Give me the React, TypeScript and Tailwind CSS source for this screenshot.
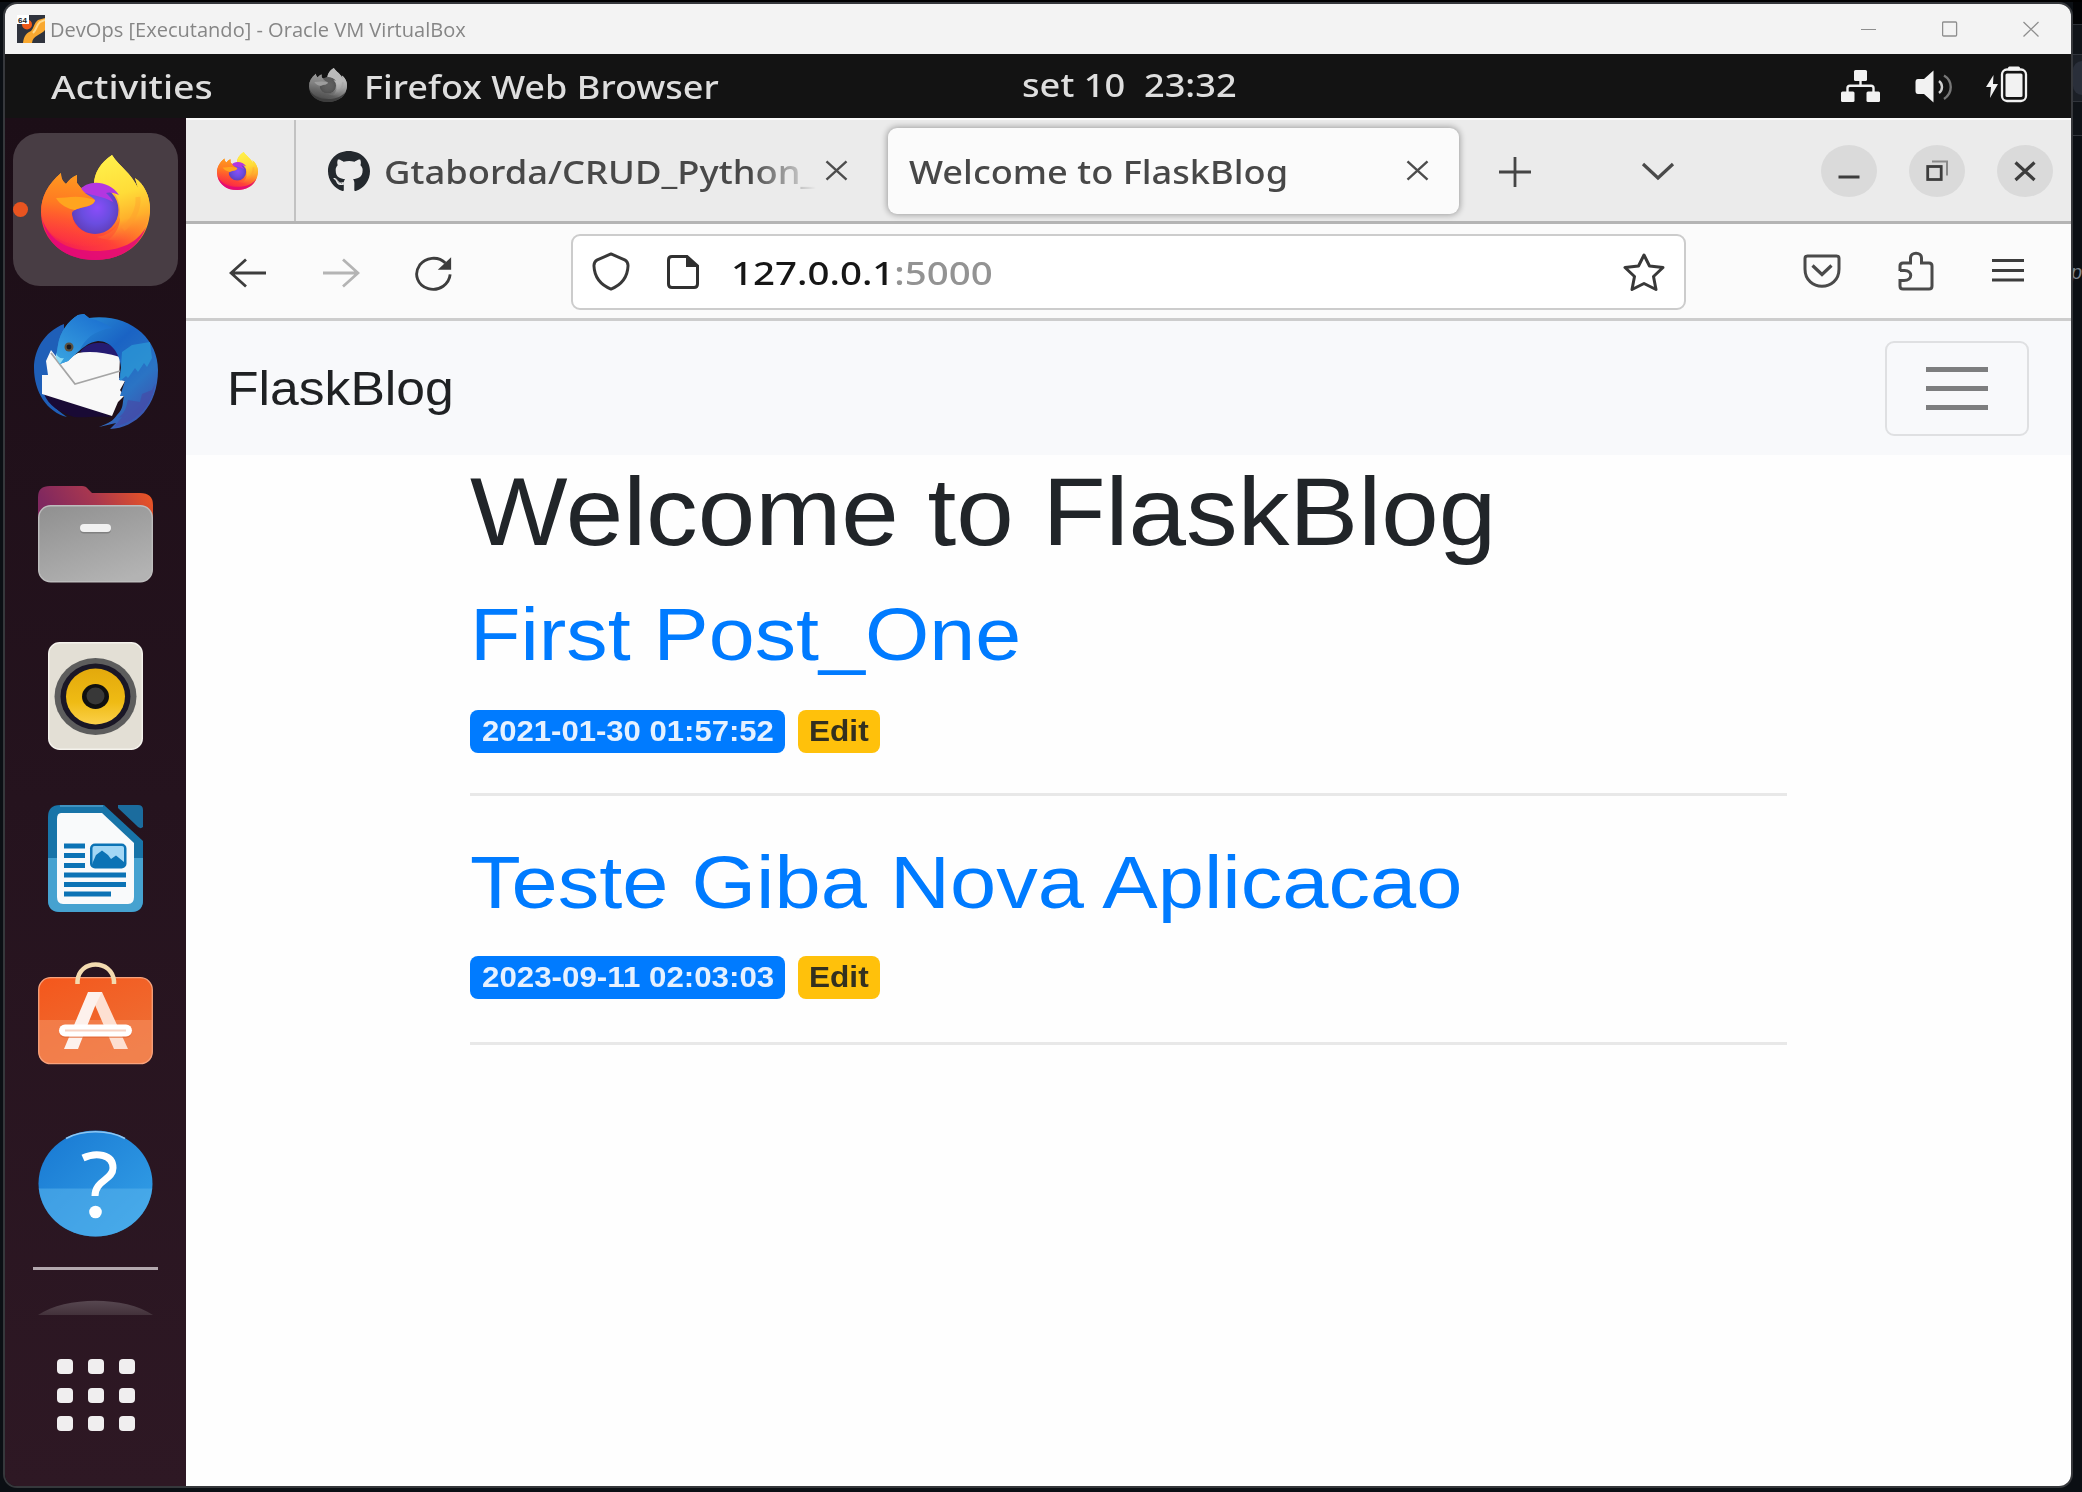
import React, { useLayoutEffect, useRef, useState } from "react";
import { FaGithub } from "react-icons/fa";

/** A single line of text stretched horizontally to fill the width of its box. */
function Stretch({ className, children }: { className: string; children: React.ReactNode }) {
  const box = useRef<HTMLSpanElement>(null);
  const text = useRef<HTMLSpanElement>(null);
  const [scale, setScale] = useState(1);
  useLayoutEffect(() => {
    if (box.current && text.current && text.current.offsetWidth) {
      setScale(box.current.clientWidth / text.current.offsetWidth);
    }
  }, []);
  return (
    <span ref={box} className={"block shrink-0 whitespace-pre " + className}>
      <span ref={text} className="inline-block origin-left" style={{ transform: `scaleX(${scale})` }}>
        {children}
      </span>
    </span>
  );
}

function FirefoxIcon({ className, id }: { className: string; id: string }) {
  return (
    <svg className={"block shrink-0 " + className} viewBox="0 0 109 105" preserveAspectRatio="none">
      <defs>
        <linearGradient id={id + "a"} x1="0.85" y1="0.05" x2="0.3" y2="1">
          <stop offset="0" stopColor="#fff44f" />
          <stop offset="0.3" stopColor="#ffc72f" />
          <stop offset="0.5" stopColor="#ff8a25" />
          <stop offset="0.72" stopColor="#ff4238" />
          <stop offset="0.86" stopColor="#fb2f45" />
          <stop offset="1" stopColor="#f0165c" />
        </linearGradient>
        <radialGradient id={id + "b"} cx="0.5" cy="0.5" r="0.62" fx="0.55" fy="0.45">
          <stop offset="0" stopColor="#8b4dfa" />
          <stop offset="0.5" stopColor="#6a4de0" />
          <stop offset="1" stopColor="#5a38a8" />
        </radialGradient>
        <linearGradient id={id + "c"} x1="0.3" y1="0" x2="0.2" y2="1">
          <stop offset="0" stopColor="#ff9a1f" />
          <stop offset="0.4" stopColor="#ff7a22" />
          <stop offset="0.9" stopColor="#ff4038" stopOpacity="0.4" />
          <stop offset="1" stopColor="#ff4038" stopOpacity="0" />
        </linearGradient>
        <linearGradient id={id + "d"} x1="0.4" y1="0" x2="0.6" y2="1">
          <stop offset="0" stopColor="#fff04a" />
          <stop offset="0.45" stopColor="#ffdc38" />
          <stop offset="0.75" stopColor="#ffb02c" />
          <stop offset="1" stopColor="#ff6a34" stopOpacity="0" />
        </linearGradient>
      </defs>
      <path
        d="M20 18C7 29 0 42 0 57C0 86 24 105 54 105C86 105 109 84 109 54C109 41 103 29 94 23L97 33C90 18 78 11 71 0C60 7 53 18 53 29L40 33L36 28L36 20C31 22 28 25 25 29C21 26 20 22 20 18Z"
        fill={"url(#" + id + "a)"}
      />
      <path
        d="M2 66C10 88 30 96 55 96C80 96 97 87 105 72C98 92 80 105 54 105C26 105 6 90 2 66Z"
        fill="#e0087a"
        opacity="0.85"
      />
      <path
        d="M71 0C59 8 53 19 53 29C68 29 78 38 79 55C79 72 70 80 56 82C85 92 109 78 109 54C109 41 103 29 94 23L97 33C90 18 78 11 71 0Z"
        fill={"url(#" + id + "d)"}
      />
      <path d="M97 42C98 56 90 68 82 74" fill="none" stroke="#ff9a2e" strokeWidth="5" opacity="0.35" />
      <ellipse cx="54" cy="55" rx="23.5" ry="24" fill={"url(#" + id + "b)"} />
      <path d="M38 36C46 24 68 25 78 40C72 37 67 37 65 38C68 41 71 44 72 47C62 41 48 40 38 36Z" fill="#b436e0" />
      <path
        d="M20 18C7 29 0 42 0 57C2 80 24 92 50 91C66 90 79 78 79 62C75 75 64 80 54 79C40 79 31 70 31 58C34 51 52 54 54 45C50 41 43 39 40 33L36 28L36 20C31 22 28 25 25 29C21 26 20 22 20 18Z"
        fill={"url(#" + id + "c)"}
      />
      <path d="M15 43C27 43 36 39 54 45C53 52 41 51 34 55C27 54 19 50 15 43Z" fill="#ffa41f" />
    </svg>
  );
}

function ThunderbirdIcon() {
  return (
    <svg className="mt-[28px] block h-[116px] w-[124px] shrink-0" viewBox="0 0 124 116">
      <defs>
        <linearGradient id="tb1" x1="0.1" y1="0" x2="0.9" y2="1">
          <stop offset="0" stopColor="#2a97da" />
          <stop offset="0.4" stopColor="#1a63c4" />
          <stop offset="0.7" stopColor="#2b74c4" />
          <stop offset="1" stopColor="#4248a8" />
        </linearGradient>
        <linearGradient id="tb2" x1="0.8" y1="0" x2="0.1" y2="1">
          <stop offset="0" stopColor="#1b6fd0" />
          <stop offset="1" stopColor="#39a3e0" />
        </linearGradient>
      </defs>
      <path d="M30 10C10 18 0 36 0 54C0 78 13 98 33 103C21 95 14 87 12 79L40 60L30 30Z" fill="#1f5fb8" />
      <path d="M10 80L60 94L78 103C60 102 50 104 40 103C25 98 15 92 10 80Z" fill="#190a35" />
      <path d="M46 38C56 24 82 26 88 44L70 46Z" fill="#251b72" />
      <path d="M17 36L12 47L14 61L8 61L8 80L78 102L84 88L90 82L86 76L91 67L85 64L86 43C70 38 55 37 44 39L27 49Z" fill="#f8f8f8" />
      <path d="M17 39L41 70L86 57" fill="none" stroke="#a5a5a5" strokeWidth="1.8" />
      <path
        d="M22 43L24 31C26 18 34 7 44 1L50 0L55 4C95 -1 124 24 124 56C124 92 102 114 76 115L82 109L65 113C75 109 79 107 83 101C90 94 88 90 90 82L86 82L91 67L85 66L87 54C86 38 76 27 64 27C55 28 46 35 34 47L26 50Z"
        fill="url(#tb1)"
      />
      <path d="M22 43L24 31C26 18 34 7 44 1L50 0L55 4C64 6 72 10 78 14C60 16 50 26 46 36L34 47L26 50Z" fill="url(#tb2)" />
      <path d="M88 38L98 31L116 28L118 44L113 53L110 49L104 58L101 54L94 64L92 62L86 67Z" fill="#2d9fda" opacity="0.65" />
      <path d="M121 70C118 92 102 108 80 113L88 103L84 104C94 96 92 90 94 86L106 88L108 80L118 76Z" fill="#4747a5" opacity="0.6" />
      <path d="M22 39C23 43 27 45 30 44L26 50L22 44Z" fill="#8fdcf5" />
      <circle cx="35" cy="33" r="4.5" fill="#5c5140" />
      <circle cx="35" cy="33" r="2.4" fill="#17181f" />
    </svg>
  );
}

function FilesIcon() {
  return (
    <svg className="mt-[55px] block h-[98px] w-[115px] shrink-0" viewBox="0 0 115 98">
      <defs>
        <linearGradient id="fi1" x1="0" y1="0.2" x2="1" y2="0">
          <stop offset="0" stopColor="#80285f" />
          <stop offset="0.45" stopColor="#a9374f" />
          <stop offset="1" stopColor="#f2581f" />
        </linearGradient>
        <linearGradient id="fi2" x1="0.2" y1="0" x2="0.7" y2="1">
          <stop offset="0" stopColor="#929292" />
          <stop offset="1" stopColor="#b3b3b3" />
        </linearGradient>
      </defs>
      <path d="M0 12Q0 1 12 1H44Q48 1 50 4L54 8H102Q115 8 115 20V40H0Z" fill="url(#fi1)" />
      <rect x="0.7" y="20.7" width="113.6" height="76" rx="12" fill="url(#fi2)" stroke="#bdbdbd" strokeWidth="1.4" />
      <rect x="42" y="40.500" width="31" height="8" rx="4" fill="#808080" />
      <rect x="42" y="39" width="31" height="8" rx="4" fill="#f1f1f1" />
    </svg>
  );
}

function MusicIcon() {
  return (
    <svg className="mt-[59px] block h-[108px] w-[95px] shrink-0" viewBox="0 0 95 108">
      <defs>
        <linearGradient id="mu1" x1="0" y1="0" x2="0" y2="1">
          <stop offset="0" stopColor="#e3a90c" />
          <stop offset="0.6" stopColor="#efbb14" />
          <stop offset="1" stopColor="#fbd04a" />
        </linearGradient>
      </defs>
      <rect x="0.7" y="0.7" width="93.6" height="106.6" rx="11" fill="#e3dfd5" stroke="#f4f2ec" strokeWidth="1.4" />
      <ellipse cx="47.500" cy="54.500" rx="41" ry="38.500" fill="#5d5d5d" />
      <ellipse cx="47.500" cy="54.500" rx="35" ry="33" fill="#1a1726" />
      <ellipse cx="47.500" cy="54.500" rx="29.500" ry="28" fill="url(#mu1)" />
      <ellipse cx="47.500" cy="54.500" rx="13.500" ry="12.500" fill="#101010" />
      <ellipse cx="47.500" cy="54" rx="9" ry="8.500" fill="#383838" />
    </svg>
  );
}

function WriterIcon() {
  return (
    <svg className="mt-[55px] block h-[107px] w-[95px] shrink-0" viewBox="0 0 95 107">
      <path d="M12 0H56L95 36V95Q95 107 83 107H12Q0 107 0 95V12Q0 0 12 0Z" fill="#1874a8" />
      <path d="M0 53H95V95Q95 107 83 107H12Q0 107 0 95Z" fill="#46a2d0" />
      <path d="M12 1H55" stroke="#4d9cc8" strokeWidth="1.500" />
      <path d="M70 0H90Q95 0 95 5V22Q92 25 88 20L70 3Z" fill="#1b6c9e" />
      <path d="M13 8H54L86 38V92Q86 99 80 99H15Q9 99 9 92V14Q9 8 13 8Z" fill="#f9fafb" />
      <g fill="#0c73b5">
        <rect x="16" y="38.500" width="21" height="5" />
        <rect x="16" y="48" width="21" height="5" />
        <rect x="16" y="58" width="21" height="5" />
        <rect x="16" y="67.500" width="62" height="5" />
        <rect x="16" y="77" width="62" height="5" />
        <rect x="16" y="86.500" width="47" height="5" />
        <rect x="42" y="38.500" width="36.500" height="25" rx="5" />
      </g>
      <rect x="44.500" y="41" width="31.500" height="19" rx="2" fill="#a3d7f5" />
      <path d="M44.500 58L48 50L54 45.500L60 50L63 54L68 50.500L76 57V60H45Z" fill="#0c73b5" />
    </svg>
  );
}

function SoftwareIcon() {
  return (
    <svg className="mt-[50px] block h-[103px] w-[115px] shrink-0" viewBox="0 0 115 103">
      <defs>
        <linearGradient id="so1" x1="0" y1="0" x2="0.6" y2="1">
          <stop offset="0" stopColor="#f4571c" />
          <stop offset="1" stopColor="#ee6f35" />
        </linearGradient>
      </defs>
      <rect x="0.7" y="15.700" width="113.600" height="86" rx="12" fill="url(#so1)" />
      <path d="M0.700 58H114.300V90Q114.300 101.700 102 101.700H13Q0.700 101.700 0.700 90Z" fill="#f38a5a" opacity="0.65" />
      <rect x="0.700" y="15.700" width="113.600" height="86" rx="12" fill="none" stroke="#f8a27c" strokeWidth="1.300" />
      <path d="M39.500 22V19C41 -3 74 -3 76 19V22" fill="none" stroke="#f3dbb0" strokeWidth="4.500" />
      <path d="M50 30H64L90 87H76L57 43Z" fill="#fde0d2" />
      <path d="M50 30H64L57.500 43L40 87H26Z" fill="#fdf1ec" />
      <rect x="21" y="64" width="73" height="12" rx="6" fill="#e0632f" opacity="0.6" />
      <rect x="21" y="62.500" width="73" height="12" rx="6" fill="#ffffff" />
      <path d="M27 68.500H88" stroke="#f8d3c4" strokeWidth="2" />
    </svg>
  );
}

function HelpIcon() {
  return (
    <svg className="mt-[65px] block h-[107px] w-[115px] shrink-0" viewBox="0 0 115 107">
      <defs>
        <clipPath id="he1">
          <rect x="0" y="58.500" width="115" height="49" />
        </clipPath>
        <linearGradient id="he2" x1="0" y1="0" x2="1" y2="1">
          <stop offset="0" stopColor="#1878d2" />
          <stop offset="1" stopColor="#35a2e8" />
        </linearGradient>
      </defs>
      <ellipse cx="57.500" cy="53.500" rx="57" ry="53" fill="url(#he2)" />
      <ellipse cx="57.500" cy="53.500" rx="57" ry="53" fill="#5ab4ec" opacity="0.55" clipPath="url(#he1)" />
      <path d="M28 8.500C44 -0.500 71 -0.500 87 8.500" fill="none" stroke="#8cc6f3" strokeWidth="1.500" />
      <path d="M45 28C58 22 75 24 75 38C75 50 57 50 57 66" fill="none" stroke="#fff" strokeWidth="7" />
      <circle cx="57.500" cy="82" r="6.300" fill="#fff" />
    </svg>
  );
}

function Dock() {
  return (
    <aside className="flex w-[181px] shrink-0 flex-col items-center bg-linear-to-b from-[#1c0e17] via-[#25131e] to-[#2e1824] pt-[15px]">
      <div className="relative flex h-[153px] w-[165px] shrink-0 items-center justify-center rounded-[27px] bg-[#483d44]">
        <FirefoxIcon id="dock" className="mb-[4px] h-[105px] w-[109px]" />
        <span className="absolute top-[69px] left-0 h-[15px] w-[15px] rounded-full bg-[#e95420]" />
      </div>
      <ThunderbirdIcon />
      <FilesIcon />
      <MusicIcon />
      <WriterIcon />
      <SoftwareIcon />
      <HelpIcon />
      <div className="mt-[30px] h-[3px] w-[125px] shrink-0 bg-[#b3a8ae]" />
      <svg className="mt-[30px] block h-[15px] w-[115px] shrink-0" viewBox="0 0 115 15">
        <defs>
          <linearGradient id="arc" x1="0" y1="0" x2="0" y2="1">
            <stop offset="0" stopColor="#574750" />
            <stop offset="1" stopColor="#43323b" />
          </linearGradient>
        </defs>
        <path d="M0 15C28 -4 87 -4 115 15Z" fill="url(#arc)" />
      </svg>
      <div className="mt-[44px] grid grid-cols-3 gap-x-[15px] gap-y-[13.500px]">
        {Array.from({ length: 9 }, (_, i) => (
          <span key={i} className="h-[15px] w-[16px] rounded-[4px] bg-[#f0eeef]" />
        ))}
      </div>
    </aside>
  );
}

function TitleBar() {
  return (
    <header className="flex h-[50px] shrink-0 items-center bg-[#f3f3f3]">
      <svg className="ml-[12px] block h-[28px] w-[28px]" viewBox="0 0 28 28">
        <rect width="28" height="28" fill="#2f333d" />
        <path d="M28 3L21 5C17 8 17 13 14 16C10 18 7 20 6 28H15C16 20 24 20 28 15Z" fill="#f9a82f" />
        <path d="M28 5L23 7C19 11 20 14 16 18" fill="none" stroke="#ffd98a" strokeWidth="2" />
        <circle cx="10" cy="9.500" r="5" fill="#ef5a1a" />
        <rect width="12" height="9" fill="#fff" />
        <text x="1" y="7.500" fontSize="8" fontWeight="700" fontFamily="Liberation Sans, sans-serif" fill="#222">64</text>
      </svg>
      <Stretch className="mt-[2px] ml-[5px] w-[416px] font-['Open_Sans',sans-serif] text-[20px] leading-[28px] text-[#868686]">
        DevOps [Executando] - Oracle VM VirtualBox
      </Stretch>
      <div className="mr-[32px] ml-auto flex items-center gap-[65px]">
        <svg className="block h-4 w-4" viewBox="0 0 16 16">
          <path d="M0 8.500H15" stroke="#8e8e8e" strokeWidth="1.200" />
        </svg>
        <svg className="block h-4 w-4" viewBox="0 0 16 16">
          <rect x="0.600" y="1" width="14" height="14" rx="1" fill="none" stroke="#8e8e8e" strokeWidth="1.300" />
        </svg>
        <svg className="block h-4 w-4" viewBox="0 0 16 16">
          <path d="M0.500 1L15.500 15.500M15.500 1L0.500 15.500" stroke="#8e8e8e" strokeWidth="1.300" />
        </svg>
      </div>
    </header>
  );
}

function TopBar() {
  return (
    <div className="flex h-[64px] shrink-0 items-center bg-[#131313] font-['Noto_Sans',sans-serif] text-[32px] leading-[40px] font-medium text-[#dedede]">
      <Stretch className="mt-[2px] ml-[46px] w-[162px]">Activities</Stretch>
      <FirefoxIcon id="bar" className="-mt-[3px] ml-[96px] h-[34px] w-[38px] brightness-125 grayscale opacity-75" />
      <Stretch className="mt-[2px] ml-[17px] w-[355px]">Firefox Web Browser</Stretch>
      <Stretch className="-mt-[2px] ml-[303px] w-[215px]">{"set 10  23:32"}</Stretch>
      <div className="mr-[43px] ml-auto flex items-center">
        <svg className="block h-[32px] w-[39px]" viewBox="0 0 39 32">
          <g fill="#f2f2f2">
            <rect x="13" y="0" width="13" height="11" rx="1.500" />
            <rect x="0" y="21.500" width="13.500" height="10.500" rx="1.500" />
            <rect x="25.500" y="21.500" width="13.500" height="10.500" rx="1.500" />
          </g>
          <path d="M19.500 10V16M6.500 22V18Q6.500 15.700 9 15.700H30Q32.500 15.700 32.500 18V22" fill="none" stroke="#f2f2f2" strokeWidth="2.400" />
        </svg>
        <svg className="ml-[35px] block h-[33px] w-[38px]" viewBox="0 0 38 33">
          <path d="M3 9H9L18.500 0.500V32.500L9 24H3Q0.500 24 0.500 21V12Q0.500 9 3 9Z" fill="#f2f2f2" />
          <path d="M24 11C28 14 28 20 24 23" fill="none" stroke="#cfcfcf" strokeWidth="2.400" />
          <path d="M29 5.500C38 11 38 23 29 29" fill="none" stroke="#777" strokeWidth="2.400" />
        </svg>
        <svg className="-mt-[4px] ml-[32px] block h-[37px] w-[43px]" viewBox="0 0 43 37">
          <path d="M8.500 9L1 21H6L5 32L13 18H8Z" fill="#f2f2f2" />
          <rect x="23" y="0.500" width="12" height="4" rx="1.500" fill="#f2f2f2" />
          <rect x="17" y="3.500" width="24" height="31.500" rx="5" fill="none" stroke="#f2f2f2" strokeWidth="2.300" />
          <rect x="20.500" y="7.500" width="17" height="23.500" rx="1.500" fill="#f2f2f2" />
        </svg>
      </div>
    </div>
  );
}

function CloseGlyph({ className }: { className: string }) {
  return (
    <svg className={"block h-[21px] w-[23px] shrink-0 " + className} viewBox="0 0 24 22">
      <path d="M1.500 1.500L22.500 20.500M22.500 1.500L1.500 20.500" stroke="#4d4d4d" strokeWidth="2.500" fill="none" />
    </svg>
  );
}

function TabStrip() {
  return (
    <div className="flex h-[106px] shrink-0 items-center border-t-2 border-b-[3px] border-t-[#fafafa] border-b-[#b4b4b4] bg-[#ebebeb] font-['Noto_Sans',sans-serif] text-[32px] leading-[40px] font-medium text-[#484848]">
      <div className="flex h-full w-[110px] shrink-0 items-center justify-center border-r-2 border-[#c2c2c2]">
        <FirefoxIcon id="tab" className="mr-[6px] h-[38px] w-[41px]" />
      </div>
      <FaGithub className="ml-[32px] h-[40px] w-[42px] shrink-0 text-[#24292e]" preserveAspectRatio="none" viewBox="0 8 496 484" />
      <Stretch className="mt-[3px] ml-[14px] w-[432px] mask-r-from-85% mask-r-to-100%">Gtaborda/CRUD_Python_</Stretch>
      <CloseGlyph className="ml-[9px]" />
      <div className="ml-[40px] flex h-[86px] w-[571px] shrink-0 items-center rounded-[9px] bg-[#fbfbfb] shadow-[0_0_6px_1px_rgba(0,0,0,0.33)]">
        <Stretch className="mt-[3px] ml-[21px] w-[379px]">Welcome to FlaskBlog</Stretch>
        <CloseGlyph className="mr-[30px] ml-auto" />
      </div>
      <svg className="ml-[40px] block h-[32px] w-[32px] shrink-0" viewBox="0 0 32 32">
        <path d="M0 17H32M16 2V32" stroke="#454545" strokeWidth="2.800" />
      </svg>
      <svg className="ml-[110px] block h-[20px] w-[34px] shrink-0" viewBox="0 0 34 20">
        <path d="M2 3L17 17L32 3" fill="none" stroke="#4a4a4a" strokeWidth="3.200" />
      </svg>
      <div className="mr-[18px] ml-auto flex gap-[32px]">
        {[0, 1, 2].map((n) => (
          <span key={n} className="flex h-[52px] w-[56px] items-center justify-center rounded-[50%] bg-[#dadada]">
            <svg className="block h-[24px] w-[24px]" viewBox="0 0 24 24" fill="none" stroke="#3d3d3d">
              {n === 0 && <path d="M1.500 18H22.500" strokeWidth="2.800" />}
              {n === 1 && (
                <>
                  <path d="M7 2.500H22V16.500" strokeWidth="2" stroke="#8a8a8a" />
                  <rect x="2.700" y="7.500" width="13.500" height="13" strokeWidth="2.800" />
                </>
              )}
              {n === 2 && <path d="M2.500 3.500L21.500 21M21.500 3.500L2.500 21" strokeWidth="3.200" />}
            </svg>
          </span>
        ))}
      </div>
    </div>
  );
}

function NavToolbar() {
  return (
    <div className="flex h-[97px] shrink-0 items-center border-b-[3px] border-[#cdcdcd] bg-[#fbfbfb]">
      <svg className="mt-[3px] ml-[43px] block h-[30px] w-[38px] shrink-0" viewBox="0 0 38 30">
        <path d="M37 15H2M17 1.500L2 15L17 28.500" fill="none" stroke="#3d3d3d" strokeWidth="2.800" />
      </svg>
      <svg className="mt-[3px] ml-[55px] block h-[30px] w-[38px] shrink-0" viewBox="0 0 38 30">
        <path d="M1 15H36M21 1.500L36 15L21 28.500" fill="none" stroke="#b4b4b4" strokeWidth="2.800" />
      </svg>
      <svg className="mt-[4px] ml-[55px] block h-[35px] w-[38px] shrink-0" viewBox="0 0 40 36">
        <path d="M32 7C24 -1 11 1 5 9C-2 19 3 31 14 34C26 37 36 29 37 19" fill="none" stroke="#3d3d3d" strokeWidth="3" />
        <path d="M38 1V14H24Z" fill="#3d3d3d" />
      </svg>
      <div className="mt-px ml-[118px] flex h-[76px] w-[1115px] shrink-0 items-center rounded-[9px] border-2 border-[#cccccc] bg-white font-['Noto_Sans',sans-serif] text-[32px] leading-[40px] font-medium">
        <svg className="ml-[19px] block h-[39px] w-[38px] shrink-0" viewBox="0 0 38 40">
          <path d="M19 2L33 8Q36.500 10 36.500 14C36 26 29 34 19 38C9 34 2 26 1.500 14Q1.500 10 5 8Z" fill="none" stroke="#383838" strokeWidth="3" strokeLinejoin="round" />
        </svg>
        <svg className="ml-[37px] block h-[34px] w-[32px] shrink-0" viewBox="0 0 32 34">
          <path d="M5 1.500H20L30.500 11V29Q30.500 32.500 27 32.500H5Q1.500 32.500 1.500 29V5Q1.500 1.500 5 1.500Z" fill="none" stroke="#303030" strokeWidth="3" />
          <path d="M19 1V12H31Z" fill="#303030" />
        </svg>
        <Stretch className="mt-[3px] ml-[32px] w-[262px] text-[#939393]">
          <span className="text-[#161616]">127.0.0.1</span>:5000
        </Stretch>
        <svg className="mr-[19px] ml-auto block h-[38px] w-[42px] shrink-0" viewBox="0 0 42 38">
          <path d="M21 2L26.500 13L40 14.500L30.500 23.500L33 36.500L21 30.500L9 36.500L11.500 23.500L2 14.500L15.500 13Z" fill="none" stroke="#383838" strokeWidth="3" strokeLinejoin="round" />
        </svg>
      </div>
      <svg className="ml-[117px] block h-[34px] w-[38px] shrink-0" viewBox="0 0 38 34">
        <path d="M4.500 2H33.500Q36 2 36 4.500V15C36 38 2 38 2 15V4.500Q2 2 4.500 2Z" fill="none" stroke="#4a4a4a" strokeWidth="3" />
        <path d="M9.500 11.500L19 20.500L28.500 11.500" fill="none" stroke="#4a4a4a" strokeWidth="3.200" />
      </svg>
      <svg className="ml-[57px] block h-[40px] w-[36px] shrink-0" viewBox="0 0 36 40">
        <path
          d="M2 20V15Q2 12 5 12H12.500V7C12.500 0.500 23.500 0.500 23.500 7V12H31Q34 12 34 15V35Q34 38 31 38H5Q2 38 2 35V29.500H6C15 29.500 15 19 6 19.500H2"
          fill="none"
          stroke="#4a4a4a"
          strokeWidth="3"
        />
      </svg>
      <svg className="ml-[58px] block h-[26px] w-[32px] shrink-0" viewBox="0 0 32 26">
        <path d="M0 2.500H32M0 12.500H32M0 22H32" stroke="#3d3d3d" strokeWidth="3" />
      </svg>
    </div>
  );
}

type Post = { title: string; date: string; titleBox: string; badgeGap: string; ruleGap: string };

const posts: Post[] = [
  { title: "First Post_One", date: "2021-01-30 01:57:52", titleBox: "mt-[20px] w-[551px]", badgeGap: "mt-[31px]", ruleGap: "mt-[40px]" },
  { title: "Teste Giba Nova Aplicacao", date: "2023-09-11 02:03:03", titleBox: "mt-[41px] w-[992px]", badgeGap: "mt-[29px]", ruleGap: "mt-[43px]" },
];

function Page() {
  return (
    <main className="flex grow flex-col bg-[#fefefe] font-['Liberation_Sans',Arial,sans-serif]">
      <nav className="flex h-[134px] shrink-0 items-center justify-between bg-[#f8f9fb] pr-[42px] pl-[41px]">
        <Stretch className="mt-px w-[227px] text-[48px] leading-[60px] text-[#1f2123]">FlaskBlog</Stretch>
        <button className="flex h-[95px] w-[144px] flex-col items-center justify-center gap-[14px] rounded-[9px] border-2 border-[#dfe0e2]">
          <span className="h-[5px] w-[62px] bg-[#7d7e7f]" />
          <span className="h-[5px] w-[62px] bg-[#7d7e7f]" />
          <span className="h-[5px] w-[62px] bg-[#7d7e7f]" />
        </button>
      </nav>
      <div className="ml-[284px] w-[1317px]">
        <h1>
          <Stretch className="h-[114px] w-[1026px] text-[97px] leading-[113px] text-[#212529]">Welcome to FlaskBlog</Stretch>
        </h1>
        {posts.map((p) => (
          <article key={p.title}>
            <h2>
              <Stretch className={"h-[90px] text-[75px] leading-[90px] text-[#007bff] " + p.titleBox}>{p.title}</Stretch>
            </h2>
            <div className={"flex gap-[13px] font-bold text-[30px] leading-[42px] " + p.badgeGap}>
              <span className="flex h-[43px] w-[315px] justify-center rounded-[8px] bg-[#007bff] text-[#e6f1ff]">
                <Stretch className="w-[292px]">{p.date}</Stretch>
              </span>
              <span className="flex h-[43px] w-[82px] justify-center rounded-[8px] bg-[#ffc10b] text-[#33301f]">
                <Stretch className="w-[60px]">Edit</Stretch>
              </span>
            </div>
            <div className={"h-[3px] bg-[#e8e8e8] " + p.ruleGap} />
          </article>
        ))}
      </div>
    </main>
  );
}

export default function App() {
  return (
    <div className="flex h-[1492px] w-[2082px] overflow-hidden border-t-2 border-black bg-[#0b0f14] pl-[3px]">
      <div className="flex h-[1486px] w-[2070px] shrink-0 flex-col overflow-hidden rounded-[14px] border-2 border-[#36383c]">
        <TitleBar />
        <TopBar />
        <div className="flex grow">
          <Dock />
          <div className="flex grow flex-col">
            <TabStrip />
            <NavToolbar />
            <Page />
          </div>
        </div>
      </div>
      <div className="flex grow flex-col overflow-hidden">
        <div className="h-[22px] shrink-0 bg-[#020305]" />
        <div className="h-[30px] shrink-0 border-t border-[#2b2f35] bg-[#101419]" />
        <div className="flex h-[48px] shrink-0 items-center border-y border-[#30343b] bg-[#1b1f26]">
          <span className="h-[34px] w-[9px] rounded-l-full bg-[#2a2f3a]" />
        </div>
        <div className="h-[34px] shrink-0 border-b border-[#30343b] bg-[#0f1318]" />
        <span className="mt-[124px] -ml-[2px] font-['Liberation_Sans',sans-serif] text-[20px] leading-[24px] text-[#7d838b] italic">p</span>
      </div>
    </div>
  );
}
